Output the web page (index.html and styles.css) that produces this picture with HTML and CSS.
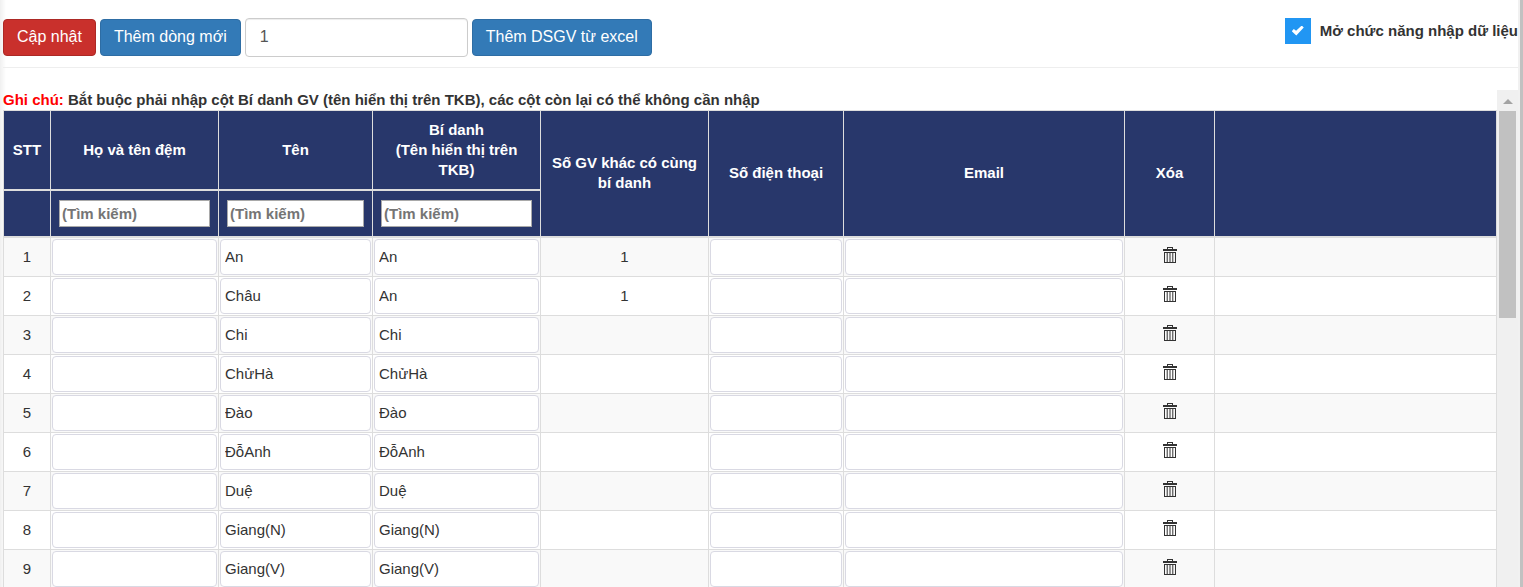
FILE: index.html
```
<!DOCTYPE html>
<html lang="vi">
<head>
    <meta charset="UTF-8">
    <meta name="viewport" content="width=device-width, initial-scale=1.0">
    <title>Danh sách giáo viên</title>
    <link rel="stylesheet" href="styles.css">
</head>
<body>

    <svg class="icon-defs" aria-hidden="true">
        <symbol id="icon-trash" viewBox="0 0 14 16">
            <path fill="currentColor" fill-rule="evenodd" d="M4 0h6v2h4v2H0V2h4zM5 1v1h4V1zM1 5h12v11H1zM2 6v9h1.7V6zM4.7 6v9h1.8V6zM7.5 6v9h1.8V6zM10.3 6v9H12V6z"/>
        </symbol>
    </svg>

    <div class="page">
        <div class="content">
            <div class="toolbar">
                <button type="button" class="btn btn-danger">Cập nhật</button>
                <button type="button" class="btn btn-primary">Thêm dòng mới</button>
                <input type="text" class="row-count" value="1" aria-label="Số dòng">
                <button type="button" class="btn btn-primary">Thêm DSGV từ excel</button>
                <label class="switch" for="allow-input">
                    <input type="checkbox" id="allow-input" checked>
                    <span>Mở chức năng nhập dữ liệu</span>
                </label>
            </div>

            <div class="list">
                <div class="list-body">
                    <p class="note"><span class="note-label">Ghi chú:</span> Bắt buộc phải nhập cột Bí danh GV (tên hiển thị trên TKB), các cột còn lại có thể không cần nhập</p>
                    <table class="teachers">
                        <colgroup>
                            <col class="col-stt">
                            <col class="col-name">
                            <col class="col-first">
                            <col class="col-name">
                            <col class="col-name">
                            <col class="col-phone">
                            <col class="col-email">
                            <col class="col-delete">
                            <col>
                        </colgroup>
                        <thead>
                            <tr class="head-row">
                                <th>STT</th>
                                <th>Họ và tên đệm</th>
                                <th>Tên</th>
                                <th>Bí danh<br>(Tên hiển thị trên TKB)</th>
                                <th rowspan="2">Số GV khác có cùng bí danh</th>
                                <th rowspan="2">Số điện thoại</th>
                                <th rowspan="2">Email</th>
                                <th rowspan="2">Xóa</th>
                                <th rowspan="2"></th>
                            </tr>
                            <tr class="filter-row">
                                <th></th>
                                <th><input type="text" placeholder="(Tìm kiếm)" aria-label="Tìm họ và tên đệm"></th>
                                <th><input type="text" placeholder="(Tìm kiếm)" aria-label="Tìm tên"></th>
                                <th><input type="text" placeholder="(Tìm kiếm)" aria-label="Tìm bí danh"></th>
                            </tr>
                        </thead>
                        <tbody id="teacher-rows"></tbody>
                    </table>
                </div>
                <div class="scrollbar" aria-hidden="true">
                    <div class="scroll-arrow"></div>
                    <div class="scroll-thumb"></div>
                </div>
            </div>
        </div>
        <div class="page-scroll" aria-hidden="true"></div>
    </div>

    <script src="script.js"></script>
</body>
</html>
```

FILE: styles.css
```
* {
    box-sizing: border-box;
}

body {
    margin: 0;
    font-family: "Liberation Sans", Arial, sans-serif;
    font-size: 15px;
    line-height: 20px;
    color: #333;
    background: #fff;
}

input, button {
    font-family: inherit;
    font-size: inherit;
    color: inherit;
}

.icon-defs {
    display: none;
}

.page {
    display: flex;
    height: 100vh;
    overflow: hidden;
    background: linear-gradient(to right, #f0f0f0, #fff 6px);
}

.content {
    flex: 1;
    min-width: 0;
    display: flex;
    flex-direction: column;
    padding-left: 3px;
}

.page-scroll {
    width: 5px;
    background: #c1c1c1;
    border-left: 2px solid #f1f1f1;
}

/* toolbar */
.toolbar {
    display: flex;
    align-items: center;
    gap: 4px;
    height: 68px;
    padding-top: 7px;
    border-bottom: 1px solid #eee;
}

.btn {
    height: 37px;
    padding: 0 13px;
    border: 1px solid;
    border-radius: 4px;
    font-size: 16px;
    color: #fff;
    white-space: nowrap;
}

.btn-danger {
    background: #c9302c;
    border-color: #ac2925;
}

.btn-primary {
    background: #337ab7;
    border-color: #2e6da4;
}

.row-count {
    width: 223px;
    height: 39px;
    padding: 0 14px;
    border: 1px solid #ccc;
    border-radius: 4px;
    box-shadow: inset 0 1px 1px rgba(0, 0, 0, 0.075);
    font-size: 16px;
    color: #555;
}

.switch {
    display: flex;
    align-items: center;
    gap: 9px;
    margin-left: auto;
    padding-bottom: 13px;
    font-weight: bold;
    white-space: nowrap;
}

.switch input {
    appearance: none;
    display: grid;
    place-items: center;
    width: 26px;
    height: 26px;
    margin: 0;
    background: #2196f3;
}

.switch input:checked::before {
    content: "";
    width: 12px;
    height: 10px;
    background: #fff;
    clip-path: polygon(0 58%, 17% 36%, 36% 52%, 83% 0, 100% 20%, 38% 100%);
}

/* list */
.list {
    flex: 1;
    min-height: 0;
    display: flex;
    margin-top: 22px;
}

.list-body {
    flex: 1;
    min-width: 0;
    overflow: hidden;
}

.note {
    margin: 0;
    font-weight: bold;
}

.note-label {
    color: #f00;
}

.scrollbar {
    width: 21px;
    padding: 9px 2px 0;
    background: #f0f0f0;
}

.scroll-arrow {
    width: 10px;
    height: 5px;
    margin: 0 4px 7px;
    background: #a3a3a3;
    clip-path: polygon(50% 0, 100% 100%, 0 100%);
}

.scroll-thumb {
    height: 207px;
    background: #c1c1c1;
}

/* table */
.teachers {
    width: 100%;
    table-layout: fixed;
    border-collapse: collapse;
}

.col-stt { width: 47px; }
.col-name { width: 168px; }
.col-first { width: 154px; }
.col-phone { width: 135px; }
.col-email { width: 281px; }
.col-delete { width: 90px; }

.teachers th,
.teachers td {
    border: 1px solid #ddd;
    text-align: center;
    vertical-align: middle;
}

.teachers th {
    padding: 8px;
    background: #28376b;
    border-bottom-width: 2px;
    color: #fff;
}

.teachers .head-row th {
    height: 79px;
}

.teachers .filter-row th {
    height: 47px;
}

.filter-row input {
    display: block;
    width: 100%;
    height: 27px;
    padding: 1px 2px;
    border: 1px solid #a9a9a9;
    font-weight: bold;
}

.filter-row input::placeholder {
    color: #757575;
}

.teachers td {
    height: 39px;
    padding: 1px;
}

.teachers tbody tr:nth-child(odd) {
    background: #f9f9f9;
}

.teachers tbody tr:nth-child(even) {
    background: #fff;
}

.cell-input {
    display: block;
    width: 100%;
    height: 36px;
    padding: 0 4px;
    background: #fff;
    border: 1px solid #d9d9e3;
    border-radius: 4px;
}

.btn-delete {
    display: block;
    margin: 0 auto;
    padding: 0 0 4px 1px;
    border: 0;
    background: none;
}

.btn-delete svg {
    display: block;
    width: 14px;
    height: 16px;
}
```

FILE: script.js
```
const teachers = [
    { ten: "An", biDanh: "An", trung: "1" },
    { ten: "Châu", biDanh: "An", trung: "1" },
    { ten: "Chi", biDanh: "Chi", trung: "" },
    { ten: "ChửHà", biDanh: "ChửHà", trung: "" },
    { ten: "Đào", biDanh: "Đào", trung: "" },
    { ten: "ĐỗAnh", biDanh: "ĐỗAnh", trung: "" },
    { ten: "Duệ", biDanh: "Duệ", trung: "" },
    { ten: "Giang(N)", biDanh: "Giang(N)", trung: "" },
    { ten: "Giang(V)", biDanh: "Giang(V)", trung: "" }
];

function inputCell(label, value) {
    return `<td><input type="text" class="cell-input" aria-label="${label}" value="${value}"></td>`;
}

document.getElementById("teacher-rows").innerHTML = teachers.map((gv, i) => `
    <tr>
        <td>${i + 1}</td>
        ${inputCell("Họ và tên đệm", "")}
        ${inputCell("Tên", gv.ten)}
        ${inputCell("Bí danh", gv.biDanh)}
        <td>${gv.trung}</td>
        ${inputCell("Số điện thoại", "")}
        ${inputCell("Email", "")}
        <td><button type="button" class="btn-delete" aria-label="Xóa"><svg><use href="#icon-trash"/></svg></button></td>
        <td></td>
    </tr>
`).join("");
```
